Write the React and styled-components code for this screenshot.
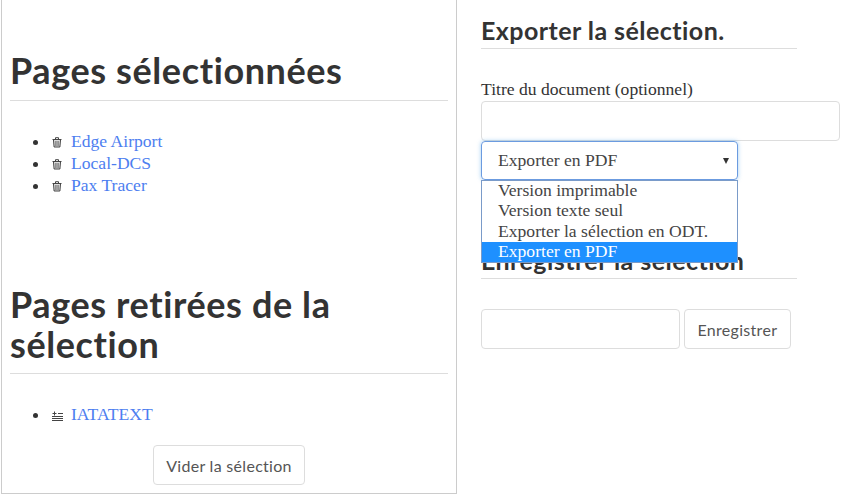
import React from "react";
import styled, { createGlobalStyle } from "styled-components";

const GlobalStyle = createGlobalStyle`
  html, body {
    margin: 0;
    padding: 0;
    background: #fff;
  }
  body {
    font-family: "Liberation Serif", Georgia, serif;
    font-size: 17.6px;
    color: #333;
  }
  * {
    box-sizing: border-box;
  }
`;

const TrashIcon = () => (
  <svg width="10" height="11" viewBox="0 0 10 11" fill="none" stroke="#444" strokeWidth="1">
    <path d="M0.5 2.500h9" />
    <path d="M3.500 2V0.700h3V2" />
    <path d="M1.500 3l.6 7h5.800l.6-7" fill="#ddd" />
    <path d="M3.700 4v5M5 4v5M6.300 4v5" strokeWidth="0.6" />
  </svg>
);

const RestoreIcon = () => (
  <svg width="11" height="10" viewBox="0 0 11 10" fill="none" stroke="#444" strokeWidth="1">
    <path d="M0 5.500h11M0 7.500h11M0 9.500h11" />
    <path d="M6 2.500h5" />
    <path d="M0.500 2.500h4M2.500 0.500v4" />
  </svg>
);

const Page = styled.div`
  width: 853px;
  height: 495px;
  display: grid;
  grid-template-columns: 456px 1fr;
  padding-left: 1px;
  overflow: hidden;
`;

const LeftPanel = styled.section`
  height: 494px;
  padding: 32px 8px 0;
  border-left: 1px solid #ccc;
  border-right: 1px solid #ccc;
  border-bottom: 1px solid #ccc;
`;

const RightPanel = styled.section`
  padding: 16px 13px 0 24px;
`;

const MainTitle = styled.h1`
  margin: ${(p) => p.$top}px 0 0;
  padding-bottom: ${(p) => p.$gap}px;
  border-bottom: 1px solid #ddd;
  font-family: Lato, "Open Sans", sans-serif;
  font-size: 36px;
  line-height: 40px;
  font-weight: 700;
  letter-spacing: 0.6px;
  color: #333;
`;

const PageList = styled.ul`
  margin: 29px 0 0;
  padding: 0 0 0 40px;
  list-style: disc;
  line-height: 22px;
`;

const PageItem = styled.li`
  padding-left: 0;
`;

const IconSlot = styled.span`
  display: inline-flex;
  width: 19px;
  margin-left: 2px;
  vertical-align: -1px;
`;

const PageLink = styled.a`
  color: #4d7ef0;
  text-decoration: none;
`;

const Button = styled.button`
  height: 40px;
  padding: 0 12.500px;
  border: 1px solid #ddd;
  border-radius: 4px;
  background: #fff;
  font-family: Lato, "Open Sans", sans-serif;
  font-size: 16px;
  letter-spacing: 0.3px;
  color: #555;
`;

const CenterRow = styled.div`
  display: flex;
  justify-content: center;
  margin-top: 20px;
`;

const SectionTitle = styled.h2`
  width: 316px;
  margin: 0;
  padding-bottom: 3px;
  border-bottom: 1px solid #ddd;
  font-family: Lato, "Open Sans", sans-serif;
  font-size: 25px;
  line-height: 29px;
  font-weight: 700;
  letter-spacing: 0.45px;
  color: #333;
`;

const FieldLabel = styled.label`
  display: block;
  margin-top: 29px;
  padding-bottom: 1px;
  line-height: 22px;
`;

const TextInput = styled.input`
  display: block;
  height: 40px;
  width: ${(p) => p.$width}px;
  border: 1px solid #ddd;
  border-radius: 4px;
  background: #fff;
`;

const SelectWrap = styled.div`
  position: relative;
  width: 257px;
`;

const SelectBox = styled.div`
  display: flex;
  align-items: center;
  justify-content: space-between;
  height: 39px;
  padding: 0 8px 0 16px;
  border: 1px solid #6b9be0;
  border-radius: 4px;
  box-shadow: 0 0 4px rgba(102, 175, 233, 0.6);
  color: #444;
`;

const Caret = styled.span`
  width: 0;
  height: 0;
  border-left: 3px solid transparent;
  border-right: 3px solid transparent;
  border-top: 6px solid #333;
`;

const Dropdown = styled.ul`
  position: absolute;
  top: 39px;
  left: 0;
  right: 0;
  margin: 0;
  padding: 0;
  list-style: none;
  background: #fff;
  border: 1px solid #7a9bc9;
  z-index: 2;
`;

const Option = styled.li`
  height: 20.340px;
  padding-left: 16px;
  line-height: ${(p) => (p.$selected ? 19 : 18)}px;
  color: ${(p) => (p.$selected ? "#fff" : "#444")};
  background: ${(p) => (p.$selected ? "#1e90ff" : "transparent")};
`;

const SaveBlock = styled.div`
  margin-top: 66px;
`;

const SaveRow = styled.div`
  display: flex;
  gap: 4px;
  margin-top: 30px;
`;

const selected = ["Edge Airport", "Local-DCS", "Pax Tracer"];
const exportOptions = [
  "Version imprimable",
  "Version texte seul",
  "Exporter la sélection en ODT.",
  "Exporter en PDF",
];

const App = () => {
  return (
    <Page>
      <GlobalStyle />
      <LeftPanel>
        <MainTitle $top={18} $gap={10}>Pages sélectionnées</MainTitle>
        <PageList>
          {selected.map((name) => (
            <PageItem key={name}>
              <IconSlot>
                <TrashIcon />
              </IconSlot>
              <PageLink href="#">{name}</PageLink>
            </PageItem>
          ))}
        </PageList>
        <MainTitle $top={88} $gap={9}>Pages retirées de la sélection</MainTitle>
        <PageList>
          <PageItem>
            <IconSlot>
              <RestoreIcon />
            </IconSlot>
            <PageLink href="#">IATATEXT</PageLink>
          </PageItem>
        </PageList>
        <CenterRow>
          <Button>Vider la sélection</Button>
        </CenterRow>
      </LeftPanel>
      <RightPanel>
        <SectionTitle>Exporter la sélection.</SectionTitle>
        <FieldLabel>Titre du document (optionnel)</FieldLabel>
        <TextInput $width={359} />
        <SelectWrap>
          <SelectBox>
            Exporter en PDF
            <Caret />
          </SelectBox>
          <Dropdown>
            {exportOptions.map((label) => (
              <Option key={label} $selected={label === "Exporter en PDF"}>
                {label}
              </Option>
            ))}
          </Dropdown>
        </SelectWrap>
        <SaveBlock>
          <SectionTitle>Enregistrer la sélection</SectionTitle>
          <SaveRow>
            <TextInput $width={199} />
            <Button>Enregistrer</Button>
          </SaveRow>
        </SaveBlock>
      </RightPanel>
    </Page>
  );
};

export default App;
